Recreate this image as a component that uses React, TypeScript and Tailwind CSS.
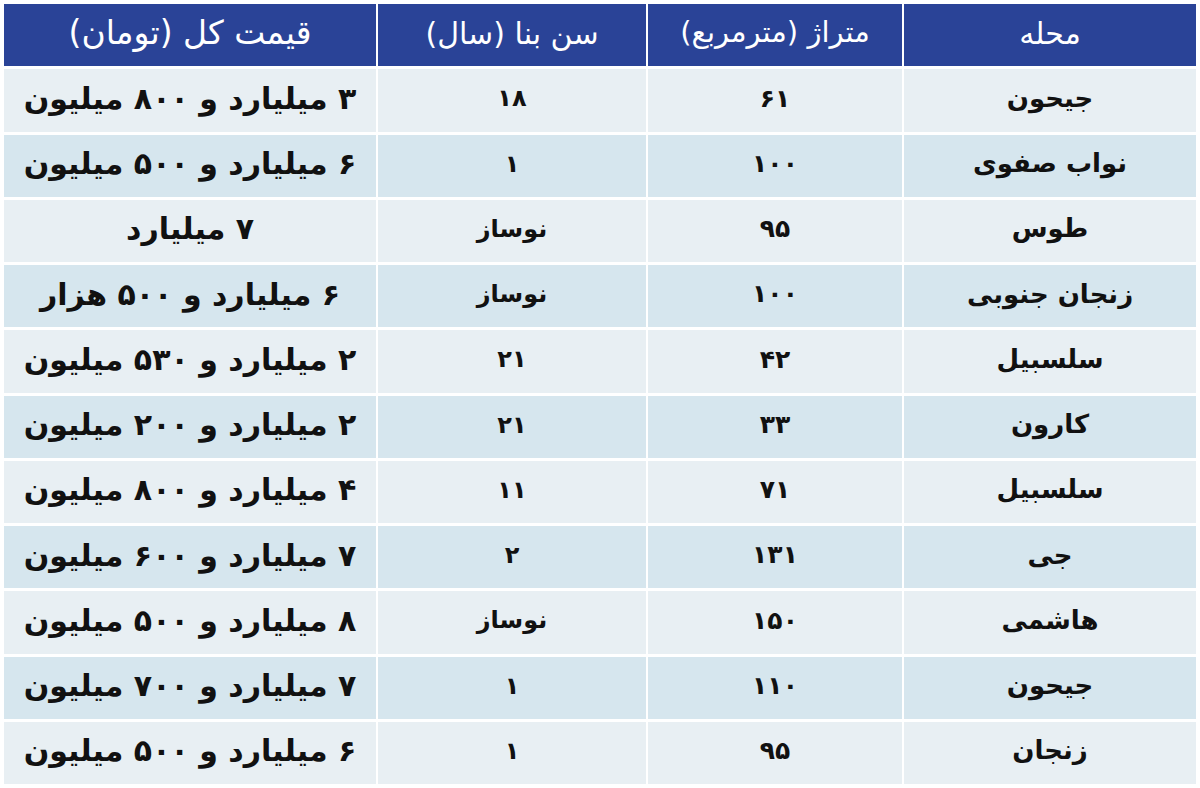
const headers = ['محله', 'متراژ (مترمربع)', 'سن بنا (سال)', 'قیمت کل (تومان)'];

const rows: string[][] = [
  ['جیحون', '۶۱', '۱۸', '۳ میلیارد و ۸۰۰ میلیون'],
  ['نواب صفوی', '۱۰۰', '۱', '۶ میلیارد و ۵۰۰ میلیون'],
  ['طوس', '۹۵', 'نوساز', '۷ میلیارد'],
  ['زنجان جنوبی', '۱۰۰', 'نوساز', '۶ میلیارد و ۵۰۰ هزار'],
  ['سلسبیل', '۴۲', '۲۱', '۲ میلیارد و ۵۳۰ میلیون'],
  ['کارون', '۳۳', '۲۱', '۲ میلیارد و ۲۰۰ میلیون'],
  ['سلسبیل', '۷۱', '۱۱', '۴ میلیارد و ۸۰۰ میلیون'],
  ['جی', '۱۳۱', '۲', '۷ میلیارد و ۶۰۰ میلیون'],
  ['هاشمی', '۱۵۰', 'نوساز', '۸ میلیارد و ۵۰۰ میلیون'],
  ['جیحون', '۱۱۰', '۱', '۷ میلیارد و ۷۰۰ میلیون'],
  ['زنجان', '۹۵', '۱', '۶ میلیارد و ۵۰۰ میلیون'],
];

const headerSize = ['text-[30px]', 'text-[29px]', 'text-[30px]', 'text-[33px]'];
const cellSize = ['text-[26px]', 'text-[25px]', 'text-[24px]', 'text-[30px]'];

export default function App() {
  return (
    <div className="w-[1200px] h-[788px] bg-white p-[4px] font-['DejaVu_Sans',sans-serif]">
      <div
        dir="rtl"
        className="grid h-[780px] grid-cols-[292px_254px_268px_372px] grid-rows-[repeat(12,1fr)] gap-x-[2px] gap-y-[3px]"
      >
        {headers.map((h, i) => (
          <div
            key={i}
            className={'flex items-center justify-center bg-[#2a4397] text-white pb-[4px] ' + headerSize[i]}
          >
            {h}
          </div>
        ))}
        {rows.map((r, ri) =>
          r.map((c, ci) => (
            <div
              key={ri + '-' + ci}
              className={
                'flex items-center justify-center font-bold text-[#111] pb-[4px] ' +
                (ri % 2 === 0 ? 'bg-[#e8eff3] ' : 'bg-[#d6e6ee] ') +
                cellSize[ci]
              }
            >
              {c}
            </div>
          ))
        )}
      </div>
    </div>
  );
}
